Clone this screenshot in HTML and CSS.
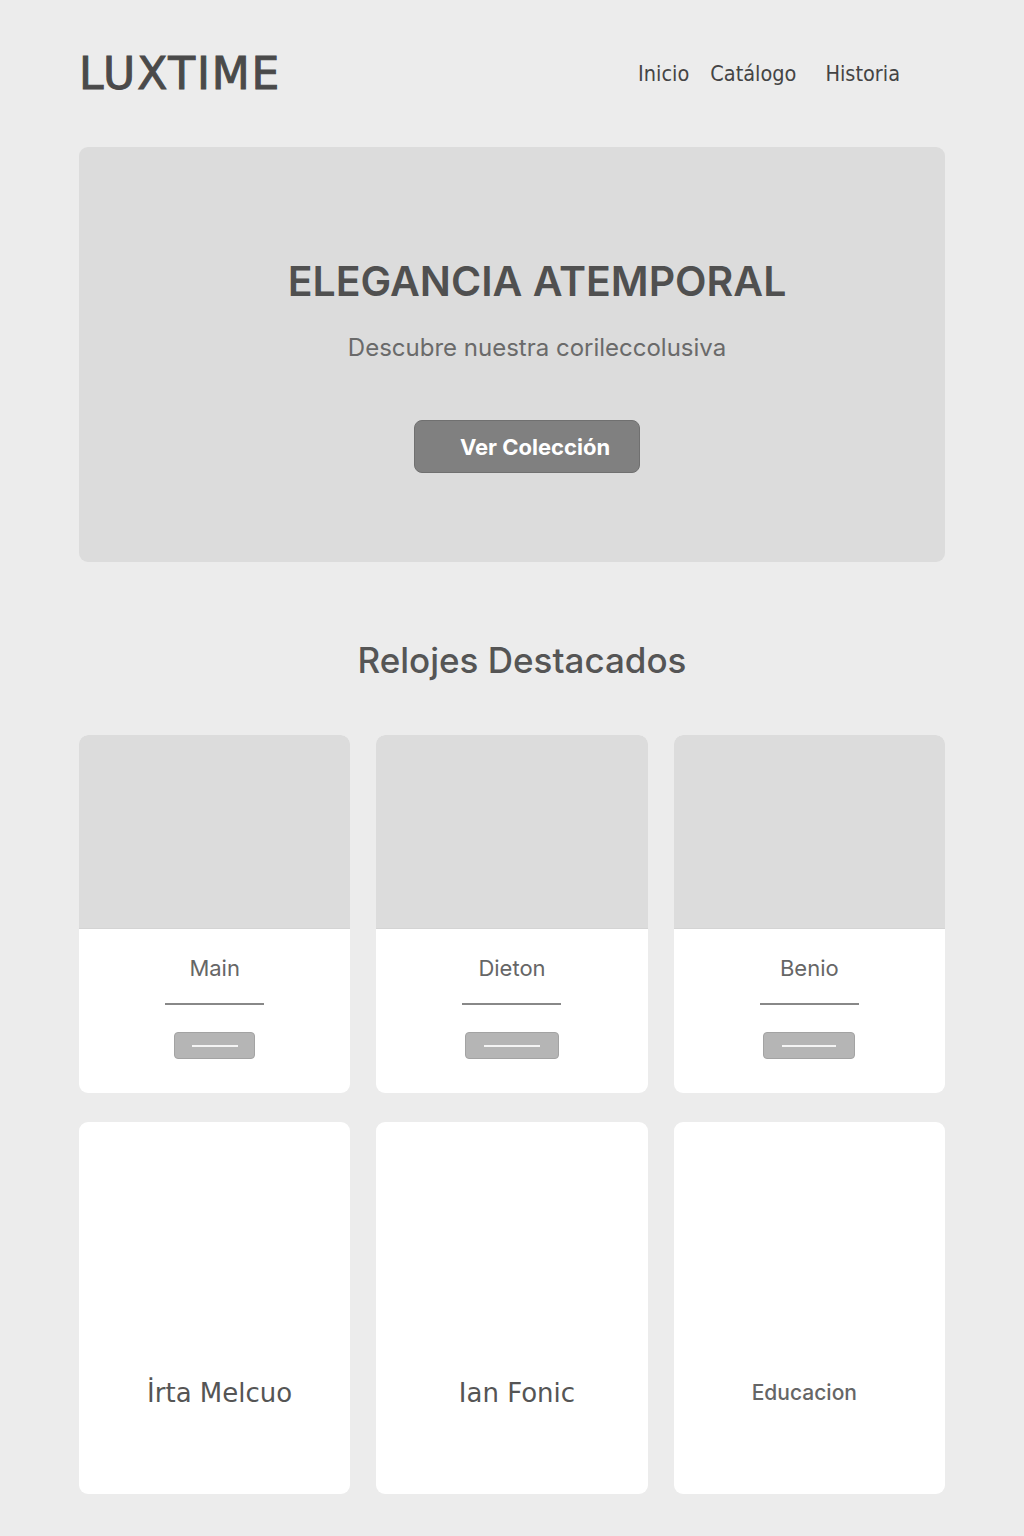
FILE: index.html
```html
<!DOCTYPE html>
<html lang="es">
<head>
<meta charset="utf-8">
<title>LUXTIME</title>
<link rel="stylesheet" href="styles.css">
</head>
<body>
<div class="page">
  <header class="header">
    <div class="logo">LUXTIME</div>
    <nav class="nav">
      <a class="nav-link" href="#">Inicio</a>
      <a class="nav-link nav-cat" href="#">Catálogo</a>
      <a class="nav-link" href="#">Historia</a>
    </nav>
  </header>

  <section class="hero">
    <h1 class="hero-title">ELEGANCIA ATEMPORAL</h1>
    <p class="hero-sub">Descubre nuestra corileccolusiva</p>
    <button class="hero-btn">Ver Colección</button>
  </section>

  <h2 class="section-title">Relojes Destacados</h2>

  <div class="grid">
    <div class="card">
      <div class="card-img"></div>
      <div class="card-body">
        <div class="card-name">Main</div>
        <div class="card-line"></div>
        <div class="card-btn b1"><span class="btn-bar"></span></div>
      </div>
    </div>
    <div class="card">
      <div class="card-img"></div>
      <div class="card-body">
        <div class="card-name">Dieton</div>
        <div class="card-line"></div>
        <div class="card-btn b2"><span class="btn-bar"></span></div>
      </div>
    </div>
    <div class="card">
      <div class="card-img"></div>
      <div class="card-body">
        <div class="card-name">Benio</div>
        <div class="card-line"></div>
        <div class="card-btn b3"><span class="btn-bar"></span></div>
      </div>
    </div>

    <div class="card tall"><div class="tall-name t1">İrta Melcuo</div></div>
    <div class="card tall"><div class="tall-name t2">Ian Fonic</div></div>
    <div class="card tall"><div class="tall-name t3">Educacion</div></div>
  </div>
</div>
</body>
</html>
```

FILE: styles.css
```css
* { box-sizing: border-box; }
html, body { margin: 0; padding: 0; }
body {
  background: #ececec;
  font-family: Inter, "Liberation Sans", sans-serif;
  color: #4a4a4a;
}
.page {
  width: 1024px;
  padding: 0 79px 43px;
}
.header {
  height: 147px;
  display: flex;
  align-items: center;
  justify-content: space-between;
}
.logo {
  font-family: "DejaVu Sans", sans-serif;
  font-size: 44px;
  font-weight: 400;
  -webkit-text-stroke: 1px #4a4a4a;
  color: #4a4a4a;
  letter-spacing: 1.8px;
}
.nav {
  display: flex;
  margin-right: 45px;
  gap: 21px;
}
.nav-cat { margin-right: 8px; }
.nav-link {
  font-family: "DejaVu Sans Condensed", "DejaVu Sans", sans-serif;
  font-stretch: condensed;
  font-size: 21.5px;
  color: #444;
  text-decoration: none;
}
.hero {
  height: 415px;
  background: #dcdcdc;
  border-radius: 9px;
  display: flex;
  flex-direction: column;
  align-items: center;
  padding: 108px 0 0 50px;
}
.hero-title {
  margin: 0;
  font-size: 41px;
  line-height: 52px;
  font-weight: 600;
  color: #505050;
}
.hero-sub {
  margin: 26px 0 0;
  font-size: 24px;
  line-height: 30px;
  color: #6a6a6a;
}
.hero-btn {
  margin: 57px 20px 0 0;
  width: 226px;
  height: 53px;
  background: #808080;
  border: 1px solid #707070;
  border-radius: 8px;
  color: #fff;
  font-family: Inter, "Liberation Sans", sans-serif;
  font-size: 22px;
  font-weight: 700;
  padding: 0 0 0 16px;
}
.section-title {
  margin: 77px 0 0;
  text-align: center;
  font-size: 35px;
  line-height: 42px;
  font-weight: 500;
  color: #555;
  padding-left: 20px;
}
.grid {
  margin-top: 54px;
  display: grid;
  grid-template-columns: 1fr 1fr 1fr;
  column-gap: 26px;
  row-gap: 29px;
}
.card {
  background: #fff;
  border-radius: 9px;
  overflow: hidden;
}
.card-img {
  height: 194px;
  background: #dcdcdc;
  border-bottom: 1px solid #d4d4d4;
}
.card-body {
  display: flex;
  flex-direction: column;
  align-items: center;
  padding: 27px 0 34px;
}
.card-name {
  font-size: 22px;
  line-height: 24px;
  color: #666;
}
.card-line {
  margin-top: 23px;
  width: 99px;
  height: 2px;
  background: #888;
}
.card-btn {
  margin-top: 27px;
  height: 27px;
  background: #b5b5b5;
  border: 1px solid #a3a3a3;
  border-radius: 4px;
  display: flex;
  align-items: center;
  justify-content: center;
}
.b1 { width: 81px; }
.b2 { width: 94px; }
.b3 { width: 92px; }
.btn-bar {
  display: block;
  height: 2px;
  background: #f4f4f4;
  width: 60%;
}
.b1 .btn-bar { width: 46px; }
.tall {
  height: 372px;
  display: flex;
  flex-direction: column;
  justify-content: flex-end;
  align-items: center;
  padding-bottom: 86px;
}
.tall-name {
  line-height: 30px;
  color: #555;
}
.t1, .t2 {
  font-family: "DejaVu Sans", sans-serif;
  font-size: 26px;
}
.t1 { padding-left: 10px; }
.t2 { padding-left: 10px; }
.t3 {
  font-size: 21px;
  font-weight: 500;
  color: #666;
  padding-right: 10px;
}
```
